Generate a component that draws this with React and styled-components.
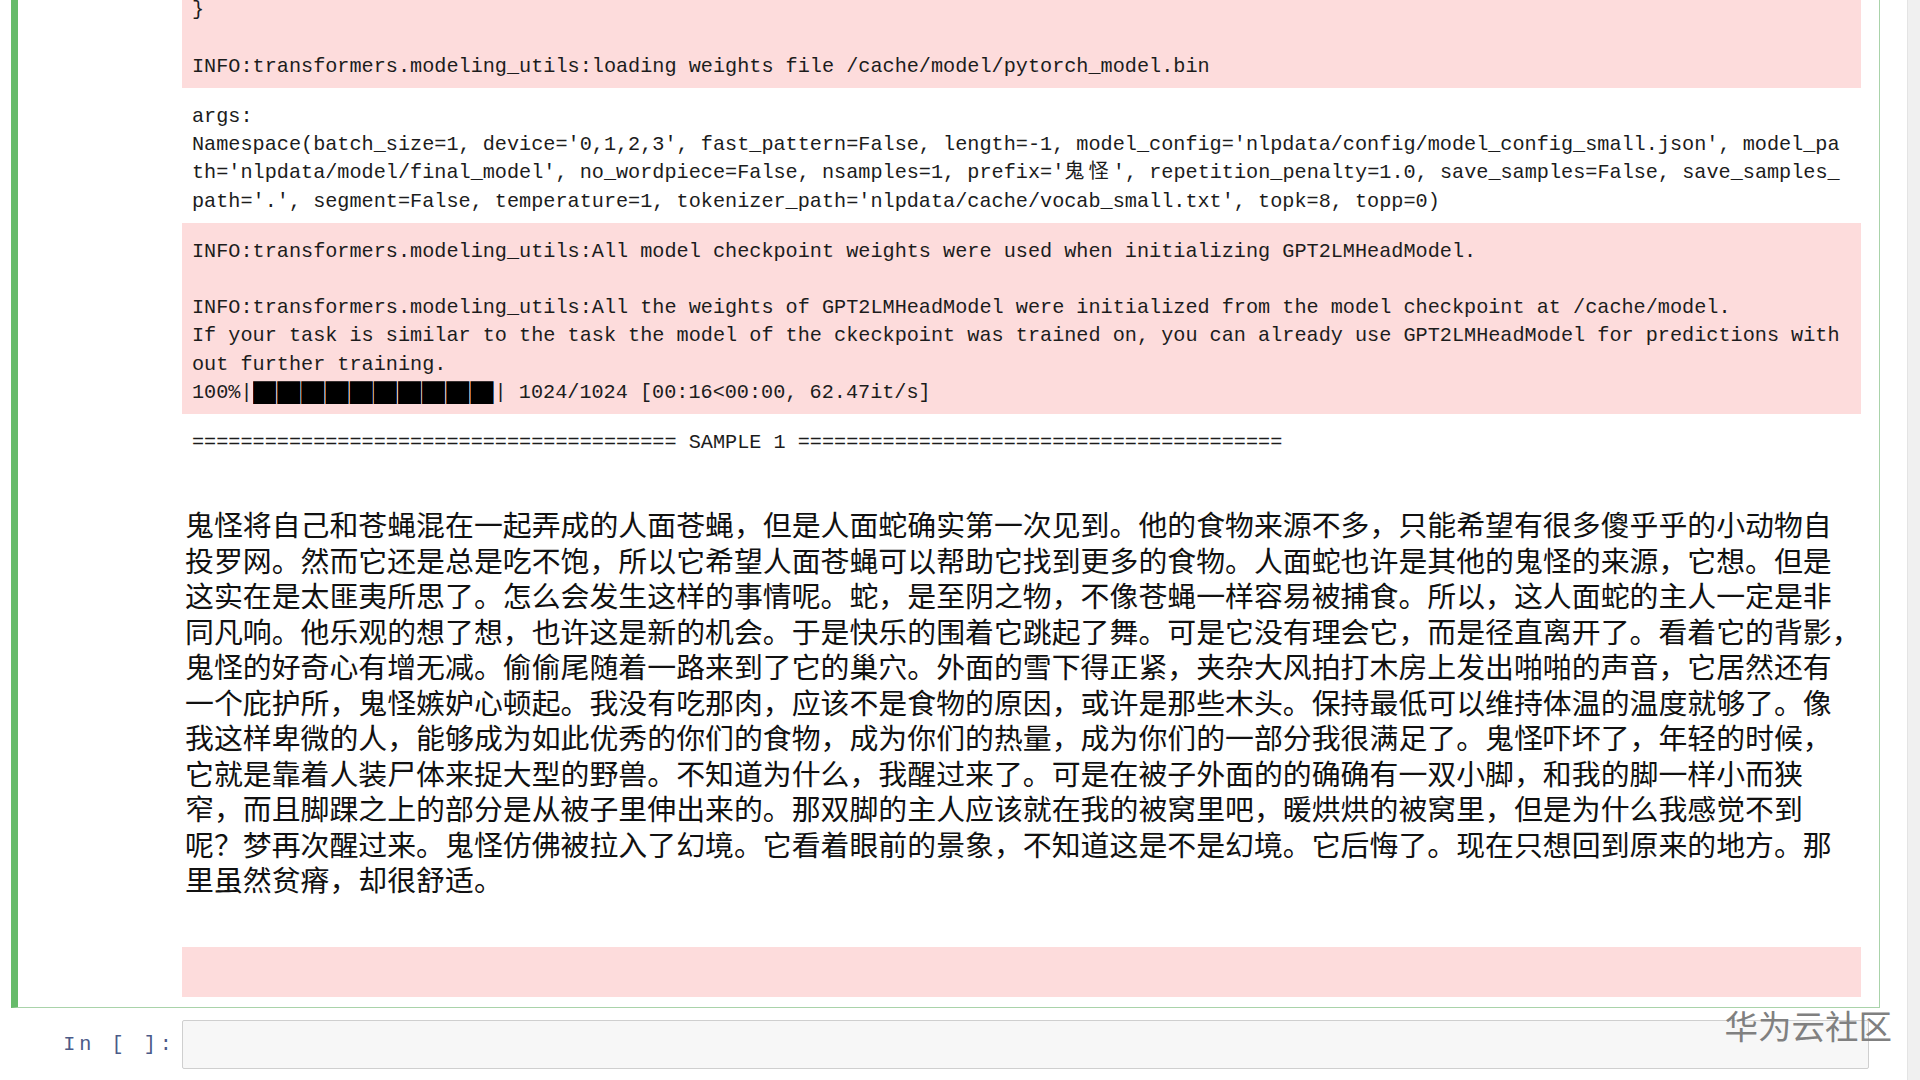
import React from 'react';
import styled, { createGlobalStyle } from 'styled-components';

const mono = '"Liberation Mono", "Noto Sans CJK SC", monospace';
const cjk = '"Noto Sans CJK SC", "Liberation Sans", sans-serif';

const GlobalStyle = createGlobalStyle`
  html, body {
    margin: 0;
    padding: 0;
    height: 100%;
    background: #fff;
    overflow: hidden;
  }
  #root {
    height: 100%;
  }
`;

const Page = styled.div`
  position: relative;
  display: flex;
  height: 100vh;
  overflow: hidden;
`;

const Notebook = styled.div`
  flex: 1;
  min-width: 0;
  display: flex;
  flex-direction: column;
  padding: 0 27px 0 11px;
  margin-top: -18.6px;
`;

const Scrollbar = styled.div`
  width: 12px;
  flex-shrink: 0;
  background: #f0f0f0;
  border-left: 1px solid #e4e4e4;
`;

const Cell = styled.div`
  display: flex;
  border-left: 7px solid #66bb6a;
  border-right: 1px solid #a9d3aa;
  border-bottom: 1px solid #a9d3aa;
  padding: 0 18px 10px 0;
`;

const PromptCol = styled.div`
  width: 164px;
  flex-shrink: 0;
  box-sizing: border-box;
  padding-right: 6px;
  text-align: right;
  font-family: ${mono};
  font-size: 20.2px;
  letter-spacing: 4px;
  color: #4b5a88;
  line-height: 49px;
`;

const OutputArea = styled.div`
  flex: 1;
  display: flex;
  flex-direction: column;
  min-width: 0;
`;

const Output = styled.pre`
  margin: 0;
  padding: 15px 10px 7px;
  background: ${(p) => (p.$stderr ? '#fddcdc' : '#fff')};
  font-family: ${mono};
  font-size: 20.2px;
  line-height: 28.2px;
  color: #1c1c1c;
  white-space: pre;
  overflow: hidden;
`;

const Wide = styled.span`
  letter-spacing: 4.1px;
`;

const Bar = styled.span`
  display: inline-block;
  width: 242px;
  vertical-align: top;
  overflow: hidden;
`;

const BarGlyphs = styled.span`
  display: inline-block;
  letter-spacing: 0.6px;
  transform: scaleX(1.9);
  transform-origin: left center;
  color: #000;
`;

const Story = styled.div`
  margin: 48.8px 0 43.5px -7px;
  font-family: ${cjk};
  font-size: 28.9px;
  line-height: 35.5px;
  color: #111;
  white-space: nowrap;
`;

const StoryLine = styled.div``;

const InputRow = styled.div`
  display: flex;
  align-items: center;
  margin-top: 12px;
  padding-left: 7px;
  padding-right: 11px;
`;

const InputBox = styled.div`
  flex: 1;
  height: 47px;
  background: #f7f7f7;
  border: 1px solid #cfcfcf;
  border-radius: 2px;
`;

const Watermark = styled.div`
  position: absolute;
  right: 28px;
  top: 1005px;
  font-family: ${cjk};
  font-size: 33.5px;
  line-height: 40px;
  color: #808080;
`;

const story = [
  '鬼怪将自己和苍蝇混在一起弄成的人面苍蝇，但是人面蛇确实第一次见到。他的食物来源不多，只能希望有很多傻乎乎的小动物自',
  '投罗网。然而它还是总是吃不饱，所以它希望人面苍蝇可以帮助它找到更多的食物。人面蛇也许是其他的鬼怪的来源，它想。但是',
  '这实在是太匪夷所思了。怎么会发生这样的事情呢。蛇，是至阴之物，不像苍蝇一样容易被捕食。所以，这人面蛇的主人一定是非',
  '同凡响。他乐观的想了想，也许这是新的机会。于是快乐的围着它跳起了舞。可是它没有理会它，而是径直离开了。看着它的背影，',
  '鬼怪的好奇心有增无减。偷偷尾随着一路来到了它的巢穴。外面的雪下得正紧，夹杂大风拍打木房上发出啪啪的声音，它居然还有',
  '一个庇护所，鬼怪嫉妒心顿起。我没有吃那肉，应该不是食物的原因，或许是那些木头。保持最低可以维持体温的温度就够了。像',
  '我这样卑微的人，能够成为如此优秀的你们的食物，成为你们的热量，成为你们的一部分我很满足了。鬼怪吓坏了，年轻的时候，',
  '它就是靠着人装尸体来捉大型的野兽。不知道为什么，我醒过来了。可是在被子外面的的确确有一双小脚，和我的脚一样小而狭',
  '窄，而且脚踝之上的部分是从被子里伸出来的。那双脚的主人应该就在我的被窝里吧，暖烘烘的被窝里，但是为什么我感觉不到',
  '呢？梦再次醒过来。鬼怪仿佛被拉入了幻境。它看着眼前的景象，不知道这是不是幻境。它后悔了。现在只想回到原来的地方。那',
  '里虽然贫瘠，却很舒适。',
];

const rule = '='.repeat(40);

export default function App() {
  return (
    <Page>
      <GlobalStyle />
      <Notebook>
        <Cell>
          <PromptCol />
          <OutputArea>
            <Output $stderr>
              {'}\n\nINFO:transformers.modeling_utils:loading weights file /cache/model/pytorch_model.bin'}
            </Output>
            <Output>
              {'args:\n'}
              {"Namespace(batch_size=1, device='0,1,2,3', fast_pattern=False, length=-1, model_config='nlpdata/config/model_config_small.json', model_pa\n"}
              {"th='nlpdata/model/final_model', no_wordpiece=False, nsamples=1, prefix='"}
              <Wide>鬼怪</Wide>
              {"', repetition_penalty=1.0, save_samples=False, save_samples_\n"}
              {"path='.', segment=False, temperature=1, tokenizer_path='nlpdata/cache/vocab_small.txt', topk=8, topp=0)"}
            </Output>
            <Output $stderr>
              {'INFO:transformers.modeling_utils:All model checkpoint weights were used when initializing GPT2LMHeadModel.\n\n'}
              {'INFO:transformers.modeling_utils:All the weights of GPT2LMHeadModel were initialized from the model checkpoint at /cache/model.\n'}
              {'If your task is similar to the task the model of the ckeckpoint was trained on, you can already use GPT2LMHeadModel for predictions with\n'}
              {'out further training.\n'}
              {'100%|'}
              <Bar>
                <BarGlyphs>██████████</BarGlyphs>
              </Bar>
              {'| 1024/1024 [00:16<00:00, 62.47it/s]'}
            </Output>
            <Output>
              {`${rule} SAMPLE 1 ${rule}`}
              <Story>
                {story.map((line, i) => (
                  <StoryLine key={i}>{line}</StoryLine>
                ))}
              </Story>
            </Output>
            <Output $stderr>{'\n'}</Output>
          </OutputArea>
        </Cell>
        <InputRow>
          <PromptCol>In [ ]:</PromptCol>
          <InputBox />
        </InputRow>
      </Notebook>
      <Scrollbar />
      <Watermark>华为云社区</Watermark>
    </Page>
  );
}
